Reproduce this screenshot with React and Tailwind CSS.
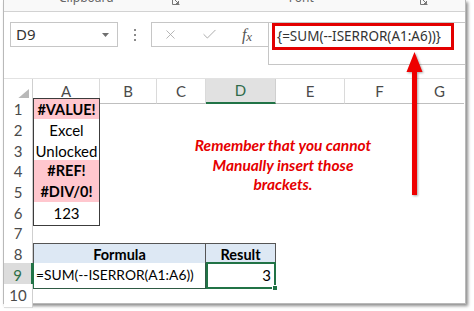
import React from "react";
import { X, Check } from "lucide-react";

const COLS = "grid grid-cols-[29px_67px_57px_49px_70px_69px_70px_49px]";
const HEIGHTS = ["h-[21px]", "h-[21px]", "h-[20px]", "h-[21px]", "h-[21px]", "h-[20px]", "h-[21px]", "h-[20px]", "h-[21px]", "h-[19px]"];

function Launcher() {
  return (
    <svg width="8" height="8" viewBox="0 0 8 8" className="block">
      <path d="M0.5 0 V7.5 H7.5" fill="none" stroke="#777" strokeWidth="1" />
      <path d="M3 3 L6.5 6.5 M6.5 4 V6.5 H4" fill="none" stroke="#777" strokeWidth="1" />
    </svg>
  );
}

function RowHeader({ n, selected }) {
  return (
    <div
      className={
        "flex items-center justify-center border-r border-b " +
        (selected
          ? "bg-[#dcdcdc] text-[#2f7049] border-r-[#217346] border-r-2 border-b-[#c8c8c8]"
          : "bg-white text-[#4a4a4a] border-r-[#cfcfcf] border-b-[#dcdcdc]")
      }
    >
      {n}
    </div>
  );
}

export default function App() {
  const aCells = [
    { t: "#VALUE!", err: true },
    { t: "Excel" },
    { t: "Unlocked" },
    { t: "#REF!", err: true },
    { t: "#DIV/0!", err: true },
    { t: "123" },
  ];

  return (
    <div className="relative w-[474px] h-[311px] bg-white overflow-hidden font-['Lato',sans-serif]">
      <div className="ml-[3px] w-[463px] h-[304px] bg-white border-l border-r border-b border-[#b9b9b9] shadow-[2px_2px_3px_rgba(0,0,0,0.45)] flex flex-col">
        {/* ribbon remnants */}
        <div className="h-[12px] shrink-0 overflow-hidden bg-[#f9f9f9] border-b border-[#d2d2d2] flex items-start text-[12px] text-[#666] font-['Noto_Sans',sans-serif] leading-[14px]">
          <span className="ml-[55px] -mt-[9px]">Clipboard</span>
          <span className="ml-[58px] -mt-[3px]"><Launcher /></span>
          <span className="ml-[109px] -mt-[9px]">Font</span>
          <span className="ml-[106px] -mt-[3px]"><Launcher /></span>
        </div>

        {/* formula bar */}
        <div className="h-[66px] shrink-0 pt-[10px] flex items-start bg-white">
          <div className="ml-[6px] w-[108px] h-[25px] border border-[#c6c6c6] flex items-center justify-between pl-[5px] pr-[8px] font-['Noto_Sans',sans-serif] text-[15px] text-[#333]">
            <span>D9</span>
            <svg width="7" height="4" viewBox="0 0 7 4"><path d="M0 0 H7 L3.5 4 Z" fill="#6f6f6f" /></svg>
          </div>
          <div className="w-[33px] h-[25px] flex flex-col items-center justify-center gap-[3px]">
            <span className="w-[2px] h-[2px] bg-[#8a8a8a]" />
            <span className="w-[2px] h-[2px] bg-[#8a8a8a]" />
            <span className="w-[2px] h-[2px] bg-[#8a8a8a]" />
          </div>
          <div className="w-[117px] h-[25px] border-t border-b border-l border-[#c6c6c6] flex items-center">
            <div className="w-[36px] flex justify-center"><X size={15} strokeWidth={1.3} color="#a5a5a5" /></div>
            <div className="w-[42px] flex justify-center"><Check size={17} strokeWidth={1.3} color="#a5a5a5" /></div>
            <div className="w-[34px] flex justify-center font-['Liberation_Serif',serif] italic text-[16px] text-[#555] leading-none">
              <span>f</span><span className="text-[13px] mt-[3px]">x</span>
            </div>
          </div>
          <div className="flex-1 h-[43px] border-t border-b border-l border-[#c6c6c6] pl-[8px] pt-[2px] font-['Noto_Sans',sans-serif] text-[13.5px] text-[#333] leading-[22px] whitespace-nowrap">
            {"{=SUM(--ISERROR(A1:A6))}"}
          </div>
        </div>

        {/* column headers */}
        <div className={COLS + " h-[20px] shrink-0 text-[15px] text-[#4a4a4a] border-t border-[#e2e2e2]"}>
          <div className="border-r border-b border-[#cfcfcf] bg-white flex items-end justify-end pr-[3px] pb-[3px]">
            <svg width="13" height="11" viewBox="0 0 13 11"><path d="M13 0 V11 H0 Z" fill="#b8b8b8" /></svg>
          </div>
          {["A", "B", "C", "D", "E", "F", "G"].map((c) =>
            c === "D" ? (
              <div key={c} className="bg-[#e1e1e1] text-[#2f6b4a] border-r border-r-[#cfcfcf] border-b-2 border-b-[#217346] flex items-center justify-center">
                {c}
              </div>
            ) : (
              <div key={c} className={"bg-white flex items-center justify-center border-b border-b-[#bfbfbf] " + (c !== "G" ? "border-r border-r-[#dadada]" : "")}>
                {c}
              </div>
            )
          )}
        </div>

        {/* rows */}
        {HEIGHTS.map((h, i) => {
          const n = i + 1;
          return (
            <div key={n} className={COLS + " " + h + " shrink-0 text-[15px] text-black"}>
              <RowHeader n={n} selected={n === 9} />
              {n <= 6 ? (
                <div
                  className={
                    "flex items-center justify-center border-x border-b border-[#3c3c3c] " +
                    (n === 1 ? "border-t " : "") +
                    (aCells[i].err ? "bg-[#ffc7ce] font-bold text-[14.5px]" : "bg-white")
                  }
                >
                  {aCells[i].t}
                </div>
              ) : n === 8 ? (
                <>
                  <div className="col-span-3 bg-[#dde8f4] border border-[#555] flex items-center justify-center font-bold text-[14.5px]">
                    Formula
                  </div>
                  <div className="bg-[#dde8f4] border-t border-r border-b border-[#555] border-b-[#2f5a44] flex items-center justify-center font-bold text-[14.5px]">
                    Result
                  </div>
                </>
              ) : n === 9 ? (
                <>
                  <div className="col-span-3 bg-white border-l border-r border-b border-[#2f5a44] border-l-[#217346] flex items-center pl-[2px] whitespace-nowrap overflow-hidden text-[13.8px]">
                    =SUM(--ISERROR(A1:A6))
                  </div>
                  <div className="relative bg-white border-2 border-[#217346] -mt-px flex items-center justify-end pr-[3px]">
                    3
                    <span className="absolute -right-[4px] -bottom-[4px] w-[6px] h-[6px] bg-[#217346] border border-white" />
                  </div>
                </>
              ) : null}
            </div>
          );
        })}
      </div>

      {/* red rectangle annotation around the formula */}
      <div className="absolute left-[272px] top-[23px] w-[182px] h-[27px] border-[3px] border-[#e30000]" />

      {/* red arrow */}
      <svg className="absolute left-[402px] top-[50px] drop-shadow-[1px_1px_1px_rgba(0,0,0,0.35)]" width="26" height="148" viewBox="0 0 26 148">
        <path d="M12.5 2 L20.5 22 H15 V145 H10 V22 H4.5 Z" fill="#ee0000" />
      </svg>

      {/* note text */}
      <div className="absolute left-[173px] top-[136px] w-[220px] text-center leading-[19.5px] text-[15.5px] font-bold italic text-[#e60000] whitespace-nowrap">
        <div>Remember that you cannot</div>
        <div>Manually insert those</div>
        <div>brackets.</div>
      </div>
    </div>
  );
}
